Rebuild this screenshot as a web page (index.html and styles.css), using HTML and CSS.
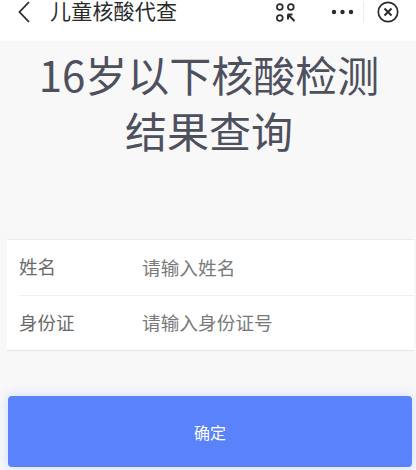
FILE: index.html
```html
<!DOCTYPE html>
<html lang="zh-CN">
<head>
<meta charset="utf-8">
<title>儿童核酸代查</title>
<link rel="stylesheet" href="styles.css">
</head>
<body>
<header class="nav">
  <div class="nav-left">
    <svg class="back" width="14" height="24" viewBox="0 0 14 24"><path d="M12 2 2.500 12 12 22" fill="none" stroke="#2a2a2a" stroke-width="1.800"/></svg>
    <span class="nav-title">儿童核酸代查</span>
  </div>
  <div class="nav-right">
    <svg class="scan" width="19" height="19" viewBox="0 0 19 19"><g fill="none" stroke="#2b2b2b" stroke-width="1.700"><circle cx="3.800" cy="4" r="2.900"/><circle cx="14.800" cy="4" r="2.900"/><circle cx="3.800" cy="15" r="2.900"/><path d="M11.500 11.500h5M12 11.500v5M12.500 12l6 6" stroke-width="2"/></g></svg>
    <svg class="dots" width="23" height="6" viewBox="0 0 23 6"><g fill="#2b2b2b"><circle cx="3" cy="3" r="2.200"/><circle cx="11.500" cy="3" r="2.200"/><circle cx="20" cy="3" r="2.200"/></g></svg>
    <span class="divider"></span>
    <svg class="close" width="22" height="22" viewBox="0 0 22 22"><circle cx="11" cy="11" r="9.700" fill="none" stroke="#2b2b2b" stroke-width="1.700"/><path d="M7.500 7.500l7 7M14.500 7.500l-7 7" stroke="#2b2b2b" stroke-width="2" fill="none"/></svg>
  </div>
</header>
<main class="page">
  <h1 class="heading">16岁以下核酸检测<br>结果查询</h1>
  <section class="form">
    <div class="row"><span class="label">姓名</span><span class="placeholder">请输入姓名</span></div>
    <div class="row"><span class="label">身份证</span><span class="placeholder">请输入身份证号</span></div>
  </section>
  <button class="submit" type="button">确定</button>
</main>
</body>
</html>
```

FILE: styles.css
```css
* { box-sizing: border-box; }
html, body { margin: 0; padding: 0; height: 100%; overflow: hidden; }
body {
  width: 416px;
  height: 470px;
  background: #f8f8f9;
  font-family: "Noto Sans CJK SC", "Noto Sans", sans-serif;
  display: flex;
  flex-direction: column;
}
.nav {
  height: 41px;
  flex: none;
  background: #fff;
  display: flex;
  justify-content: space-between;
  align-items: flex-start;
  padding: 0 17px;
}
.nav-left { display: flex; align-items: center; gap: 19px; height: 24px; }
.nav-title {
  font-family: "Liberation Sans", "Noto Sans CJK SC", sans-serif;
  font-size: 21px;
  line-height: 24px;
  color: #2a2a2a;
  letter-spacing: 0.2px;
}
.nav-right { display: flex; align-items: center; height: 24px; }
.scan { margin-right: 36px; }
.dots { margin-right: 9px; }
.divider { width: 1px; height: 20px; background: #eee; margin-right: 13px; }
.page { flex: 1; display: flex; flex-direction: column; padding: 0 4px 0 8px; }
.heading {
  margin: 5px 0 0 -2px;
  font-size: 42px;
  line-height: 56px;
  font-weight: 400;
  color: #4e505e;
  text-align: center;
  height: 120px;
}
.form {
  margin: 73px 0 0 -1px;
  background: #fff;
  border-top: 1px solid #ececec;
  border-bottom: 1px solid #e6e6e6;
  width: 407px;
}
.row {
  height: 55px;
  display: flex;
  align-items: center;
  margin-left: 12px;
  padding-bottom: 3px;
}
.row + .row { border-top: 1px solid #f0f0f0; }
.label { width: 123px; font-size: 18.500px; color: #6a6a6a; }
.placeholder { font-size: 18.700px; color: #7a7a7a; }
.submit {
  margin-top: 45px;
  height: 71px;
  border: 0;
  border-radius: 4px;
  background: #5a82fb;
  color: #fff;
  font: 400 16px "Noto Sans CJK SC", sans-serif;
  box-shadow: 0 0 12px rgba(90, 130, 251, .25);
  padding: 0;
}
```
